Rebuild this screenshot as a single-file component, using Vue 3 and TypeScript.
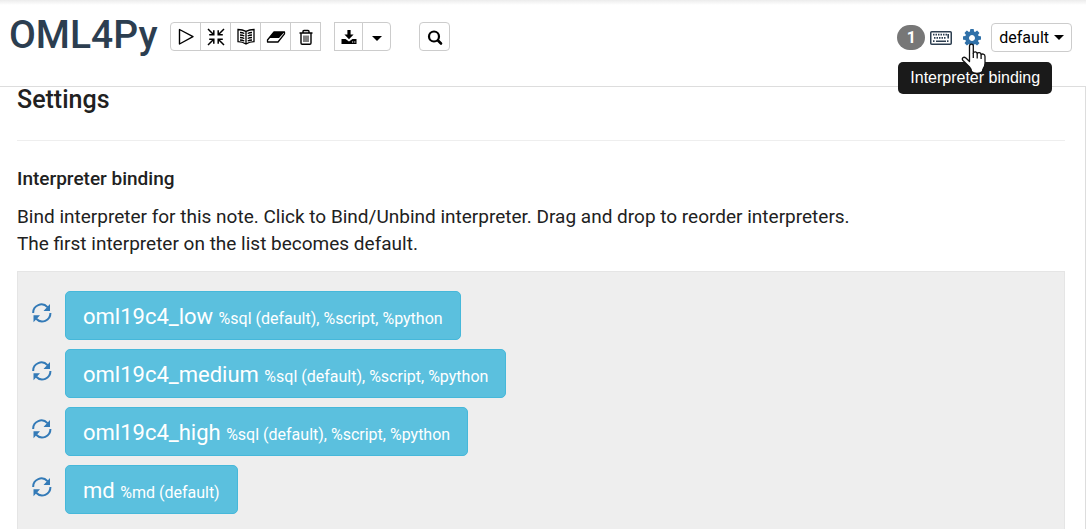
<script setup lang="ts">
import { ref } from 'vue'

interface Interpreter {
  name: string
  detail: string
}

const interpreters = ref<Interpreter[]>([
  { name: 'oml19c4_low', detail: '%sql (default), %script, %python' },
  { name: 'oml19c4_medium', detail: '%sql (default), %script, %python' },
  { name: 'oml19c4_high', detail: '%sql (default), %script, %python' },
  { name: 'md', detail: '%md (default)' },
])
</script>

<template>
  <div class="page">
    <header class="bar">
      <h1 class="title">OML4Py</h1>
      <div class="group first">
        <button class="tool" type="button" aria-label="Run all paragraphs">
          <svg width="18" height="18" viewBox="0 0 18 18"><path d="M2.5 1.5v14.5L16 8.7z" fill="none" stroke="#000" stroke-width="1.4" stroke-linejoin="round" /></svg>
        </button>
        <button class="tool" type="button" aria-label="Show or hide the code">
          <svg width="18" height="18" viewBox="0 0 18 18" fill="none" stroke="#000" stroke-width="1.5">
            <path d="M1 1l5 5M6.8 2.2v4.6H2.2M17 1l-5 5M11.2 2.2v4.6h4.6M1 17l5-5M6.8 15.8v-4.6H2.2M17 17l-5-5M11.2 15.8v-4.6h4.6" />
          </svg>
        </button>
        <button class="tool" type="button" aria-label="Show or hide the output">
          <svg width="18" height="18" viewBox="0 0 18 18" fill="none" stroke="#000" stroke-width="1.3">
            <path d="M9 3.4Q5.5 1.6 1 1.5v12.2Q5.5 13.8 9 16Q12.5 13.8 17 13.7V1.5Q12.5 1.6 9 3.4zM9 3.4V16" />
            <path d="M3 4.500q2.500.1 4.300 1M3 7q2.500.1 4.300 1M3 9.500q2.500.1 4.300 1M3 12q2.500.1 4.300 1M15 4.500q-2.500.1-4.300 1M15 7q-2.500.1-4.300 1M15 9.500q-2.500.1-4.300 1M15 12q-2.500.1-4.300 1" />
          </svg>
        </button>
        <button class="tool" type="button" aria-label="Clear output">
          <svg width="20" height="18" viewBox="0 0 20 18">
            <path d="M8 4h10.500l-5.500 6H2.800z" fill="#000" />
            <path d="M8 4h10.500v1.800L12 14H1.500v-2z" fill="none" stroke="#000" stroke-width="1.300" stroke-linejoin="round" />
          </svg>
        </button>
        <button class="tool" type="button" aria-label="Move to trash">
          <svg width="18" height="18" viewBox="0 0 18 18" fill="none" stroke="#000" stroke-width="1.400">
            <path d="M2.500 5h13M6 4.700V3.500q0-1 1-1h4q1 0 1 1v1.200M4 5v10q0 1.200 1.200 1.200h7.600q1.200 0 1.200-1.200V5" />
            <path d="M7 7.500v6.500M9 7.500v6.500M11 7.500v6.500" stroke-width="1" />
          </svg>
        </button>
      </div>
      <div class="group second">
        <button class="tool" type="button" aria-label="Export">
          <svg width="18" height="18" viewBox="0 0 18 18">
            <path d="M7.400 2h3.200v4.500h3L9 11.300 4.400 6.500h3zM1.500 11h4l3.500 2.500 3.500-2.500h4v5h-15z" />
            <path d="M12 14h1.200M14.200 14h1.200" stroke="#fff" />
          </svg>
        </button>
        <button class="tool" type="button" aria-label="Export options">
          <svg width="18" height="18" viewBox="0 0 18 18"><path d="M4 8h10l-5 5z" /></svg>
        </button>
      </div>
      <div class="group">
        <button class="tool" type="button" aria-label="Search code">
          <svg width="18" height="18" viewBox="0 0 18 18" fill="none" stroke="#000"><circle cx="8" cy="8.500" r="5" stroke-width="2.200" /><path d="M12 12.500l3 3" stroke-width="2.600" stroke-linecap="round" /></svg>
        </button>
      </div>
      <div class="right">
        <span class="badge">1</span>
        <button class="bare" type="button" aria-label="List of shortcuts">
          <svg width="22" height="14" viewBox="0 0 22 14">
            <rect x=".75" y=".75" width="20.500" height="12.500" rx="1" fill="none" stroke="#2c3e50" stroke-width="1.500" />
            <path d="M3 3.700h14M4 6.800h12M3 10.200h2M17 10.200h2" stroke="#2c3e50" stroke-width="1.800" stroke-dasharray="1.500 1" fill="none" />
            <path d="M6 10.200h10M18.200 3v4.500" stroke="#2c3e50" stroke-width="1.600" />
          </svg>
        </button>
        <div class="binding">
          <button class="bare" type="button" aria-describedby="binding-tip" aria-label="Settings">
            <svg width="18" height="18" viewBox="128 128 1536 1536"><path fill="#3071a9" d="M1152 896q0-106-75-181t-181-75-181 75-75 181 75 181 181 75 181-75 75-181zm512-109v222q0 12-8 23t-20 13l-185 28q-19 54-39 91 35 50 107 138 10 12 10 25t-9 23q-27 37-99 108t-94 71q-12 0-26-9l-138-108q-44 23-91 38-16 136-29 186-7 28-36 28h-222q-14 0-24.500-8.500t-11.500-21.500l-28-184q-49-16-90-37l-141 107q-10 9-25 9-14 0-25-11-126-114-165-168-7-10-7-23 0-12 8-23 15-21 51-66.500t54-70.500q-27-50-41-99l-183-27q-13-2-21-12.500t-8-23.500v-222q0-12 8-23t19-13l186-28q14-46 39-92-40-57-107-138-10-12-10-24 0-10 9-23 26-36 98.500-107.500t94.500-71.500q13 0 26 10l138 107q44-23 91-38 16-136 29-186 7-28 36-28h222q14 0 24.500 8.500t11.500 21.500l28 184q49 16 90 37l142-107q9-9 24-9 13 0 25 10 129 119 165 170 7 8 7 22 0 12-8 23-15 21-51 66.500t-54 70.500q26 50 41 98l183 28q13 2 21 12.500t8 23.500z" /></svg>
          </button>
          <span id="binding-tip" class="tip" role="tooltip">Interpreter binding</span>
          <svg class="pointer" width="26" height="32" viewBox="0 0 26 32">
            <path d="M8.500 18.500V3.200q0-2 1.900-2t1.900 2v7q.3-1.600 2.100-1.400 1.700.2 1.800 1.900.6-1.300 2.200-1 1.600.3 1.700 2 .8-1 2.200-.6 1.700.5 1.700 2.300v6.800q0 3-1.700 5.300-.8 1.300-.8 2.800-1.500 2-5.500 2t-5.500-2q-.2-2.300-2-4.300L2 17.500q-1.300-1.700-.1-2.800 1.300-1 3 .3z" fill="#fff" stroke="#111" stroke-width="1.300" stroke-linejoin="round" />
            <path d="M12.300 10v5M16.200 10.700v4.800M20.100 11.700v4.300" stroke="#111" stroke-width="1.300" />
          </svg>
        </div>
        <button class="mode" type="button">default
          <svg width="10" height="5" viewBox="0 0 10 5"><path d="M0 0h10L5 5z" /></svg>
        </button>
      </div>
    </header>

    <main class="content">
      <h2 class="heading">Settings</h2>
      <hr class="rule">
      <h3 class="subheading">Interpreter binding</h3>
      <p class="help">
        Bind interpreter for this note. Click to Bind/Unbind interpreter. Drag and drop to reorder interpreters.<br>
        The first interpreter on the list becomes default.
      </p>
      <ul class="panel">
        <li v-for="item in interpreters" :key="item.name" class="row">
          <button class="bare restart" type="button" :aria-label="`Restart ${item.name}`">
            <svg width="20" height="20" viewBox="0 0 20 20">
              <path d="M1.200 10A8.200 8.200 0 0 1 15.500 4.200M18.400 10A8.200 8.200 0 0 1 4.200 15.800" fill="none" stroke="#337ab7" stroke-width="2" />
              <path d="M18 1v7h-6.500zM1.500 19.200v-7H8z" fill="#337ab7" />
            </svg>
          </button>
          <button class="interpreter" type="button">{{ item.name }} <small>{{ item.detail }}</small></button>
        </li>
      </ul>
    </main>
  </div>
</template>

<style>
body {
  margin: 0;
  background: #fff;
}
</style>

<style scoped>
* {
  box-sizing: border-box;
}
.page {
  display: flex;
  flex-direction: column;
  min-height: 100vh;
  font-family: Roboto, "Liberation Sans", sans-serif;
  color: #212121;
}
button {
  font-family: inherit;
  cursor: pointer;
}
svg {
  display: block;
  flex: none;
}
.bar {
  display: flex;
  align-items: center;
  height: 86px;
  padding: 0 14px 13px 9px;
  background: linear-gradient(#ececec, #fff 5px);
}
.title {
  margin: 0 13px 4px 0;
  font-size: 39px;
  line-height: 46px;
  font-weight: 500;
  color: #2c3e50;
}
.group {
  display: flex;
}
.first {
  margin-right: 13px;
}
.second {
  margin-right: 28px;
}
.tool {
  display: flex;
  align-items: center;
  justify-content: center;
  width: 31px;
  height: 29px;
  margin-left: -1px;
  padding: 0;
  border: 1px solid #ccc;
  background: #fff;
}
.tool:first-child {
  margin-left: 0;
}
.second .tool {
  width: 29px;
}
.first .tool:first-child {
  border-radius: 4px 0 0 4px;
}
.second .tool:last-child {
  border-radius: 0 4px 4px 0;
}
.tool:only-child {
  border-radius: 4px;
}
.right {
  display: flex;
  align-items: center;
  margin-left: auto;
  padding-top: 2px;
}
.badge {
  width: 28px;
  margin-right: 5px;
  border-radius: 13px;
  background: #777;
  color: #fff;
  font-size: 16px;
  line-height: 25px;
  font-weight: 700;
  text-align: center;
}
.bare {
  display: block;
  padding: 0;
  border: 0;
  background: none;
}
.binding {
  position: relative;
  margin: 0 10px 0 11px;
}
.tip {
  position: absolute;
  top: 33px;
  left: -65px;
  padding: 0 12px;
  border-radius: 5px;
  background: #1a1a1a;
  color: #fff;
  font-family: "Liberation Sans", Arial, sans-serif;
  font-size: 16px;
  line-height: 32px;
  white-space: nowrap;
}
.pointer {
  position: absolute;
  top: 14px;
  left: -2px;
}
.mode {
  display: flex;
  align-items: center;
  gap: 5px;
  height: 29px;
  padding: 0 7px;
  border: 1px solid #ccc;
  border-radius: 4px;
  background: #fff;
  color: #000;
  font-size: 16px;
}
.content {
  display: flex;
  flex: 1;
  flex-direction: column;
  padding: 0 20px 0 17px;
  border-top: 1px solid #ddd;
  border-right: 1px solid #ddd;
}
.heading {
  margin: 0;
  font-size: 25px;
  line-height: 25px;
  font-weight: 500;
}
.rule {
  width: 100%;
  margin: 28px 0 0;
  border: 0;
  border-top: 1px solid #eee;
}
.subheading {
  margin: 24px 0 0;
  font-size: 19px;
  line-height: 27px;
  font-weight: 500;
}
.help {
  margin: 11px 0 0;
  font-size: 19px;
  line-height: 27px;
}
.panel {
  display: flex;
  flex: 1;
  flex-direction: column;
  gap: 9px;
  margin: 14px 0 0;
  padding: 19px 14px 14px;
  border: 1px solid #e5e5e5;
  border-bottom: 0;
  background: #eee;
  list-style: none;
}
.row {
  display: flex;
  align-items: center;
  gap: 13px;
}
.restart {
  margin-bottom: 6px;
}
.interpreter {
  height: 49px;
  padding: 4px 17px 0;
  border: 1px solid #46b8da;
  border-radius: 5px;
  background: #5bc0de;
  color: #fff;
  font-size: 22px;
  line-height: 31px;
}
.interpreter small {
  font-size: 16px;
}
</style>
